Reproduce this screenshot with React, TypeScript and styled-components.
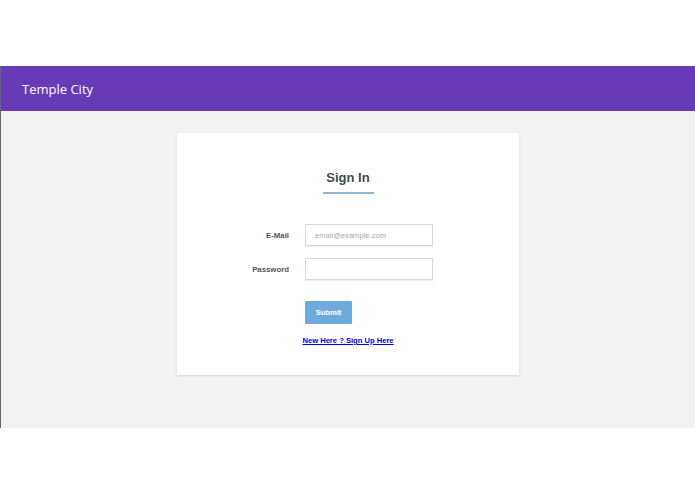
import React from "react";
import styled, { createGlobalStyle } from "styled-components";

const GlobalStyle = createGlobalStyle`
  body {
    margin: 0;
    background: #ffffff;
    font-family: "Liberation Sans", Arial, sans-serif;
  }
`;

const Page = styled.div`
  padding-top: 66px;
  height: 494px;
  box-sizing: border-box;
`;

const Frame = styled.div`
  border-left: 1px solid #5d6b6b;
`;

const Header = styled.header`
  height: 45px;
  background-color: #673ab7;
  display: flex;
  align-items: center;
  padding-left: 21px;
  color: #ffffff;
  font-family: "Open Sans", sans-serif;
  font-size: 13px;
`;

const Main = styled.main`
  background-color: #f2f2f2;
  height: 317px;
  padding-top: 22px;
  box-sizing: border-box;
`;

const Card = styled.div`
  width: 342px;
  height: 242px;
  margin: 0 auto;
  background: #ffffff;
  box-shadow: 0 1px 2px rgba(0, 0, 0, 0.12);
  box-sizing: border-box;
  padding-top: 36px;
  display: flex;
  flex-direction: column;
  align-items: center;
`;

const Title = styled.h2`
  margin: 0;
  font-size: 13px;
  line-height: 17px;
  font-weight: bold;
  color: #454a50;
  display: flex;
  flex-direction: column;
  align-items: center;

  &::after {
    content: "";
    display: block;
    width: 51px;
    height: 2px;
    margin-top: 6px;
    background: #8db7da;
  }
`;

const Form = styled.form`
  margin-top: 30px;
  display: grid;
  grid-template-columns: 112px 128px;
  column-gap: 16px;
  row-gap: 12px;
  align-items: center;
  align-self: flex-start;
`;

const Label = styled.label`
  justify-self: end;
  font-size: 7.8px;
  font-weight: bold;
  color: #555555;
`;

const Input = styled.input`
  width: 128px;
  height: 22px;
  box-sizing: border-box;
  border: 1px solid #d8d8d8;
  box-shadow: 0 1px 1px rgba(0, 0, 0, 0.06);
  padding: 0 9px;
  font-family: "Liberation Sans", Arial, sans-serif;
  font-size: 7.6px;
  outline: none;

  &::placeholder {
    color: #a8a8a8;
  }
`;

const Submit = styled.button`
  grid-column: 2;
  margin-top: 9px;
  width: 47px;
  height: 23px;
  border: none;
  border-radius: 1px;
  background-color: #6eaade;
  color: #ffffff;
  font-family: "Liberation Sans", Arial, sans-serif;
  font-size: 7.6px;
  font-weight: bold;
  padding: 0;
`;

const SignUp = styled.a`
  margin-top: 12px;
  font-size: 7.6px;
  font-weight: bold;
  color: #0000ee;
  text-decoration: underline;
`;

export default function App() {
  return (
    <Page>
      <GlobalStyle />
      <Frame>
        <Header>Temple City</Header>
        <Main>
          <Card>
            <Title>Sign In</Title>
            <Form onSubmit={(e) => e.preventDefault()}>
              <Label htmlFor="email">E-Mail</Label>
              <Input id="email" type="email" placeholder="email@example.com" />
              <Label htmlFor="password">Password</Label>
              <Input id="password" type="password" />
              <Submit type="submit">Submit</Submit>
            </Form>
            <SignUp href="#signup">New Here ? Sign Up Here</SignUp>
          </Card>
        </Main>
      </Frame>
    </Page>
  );
}
